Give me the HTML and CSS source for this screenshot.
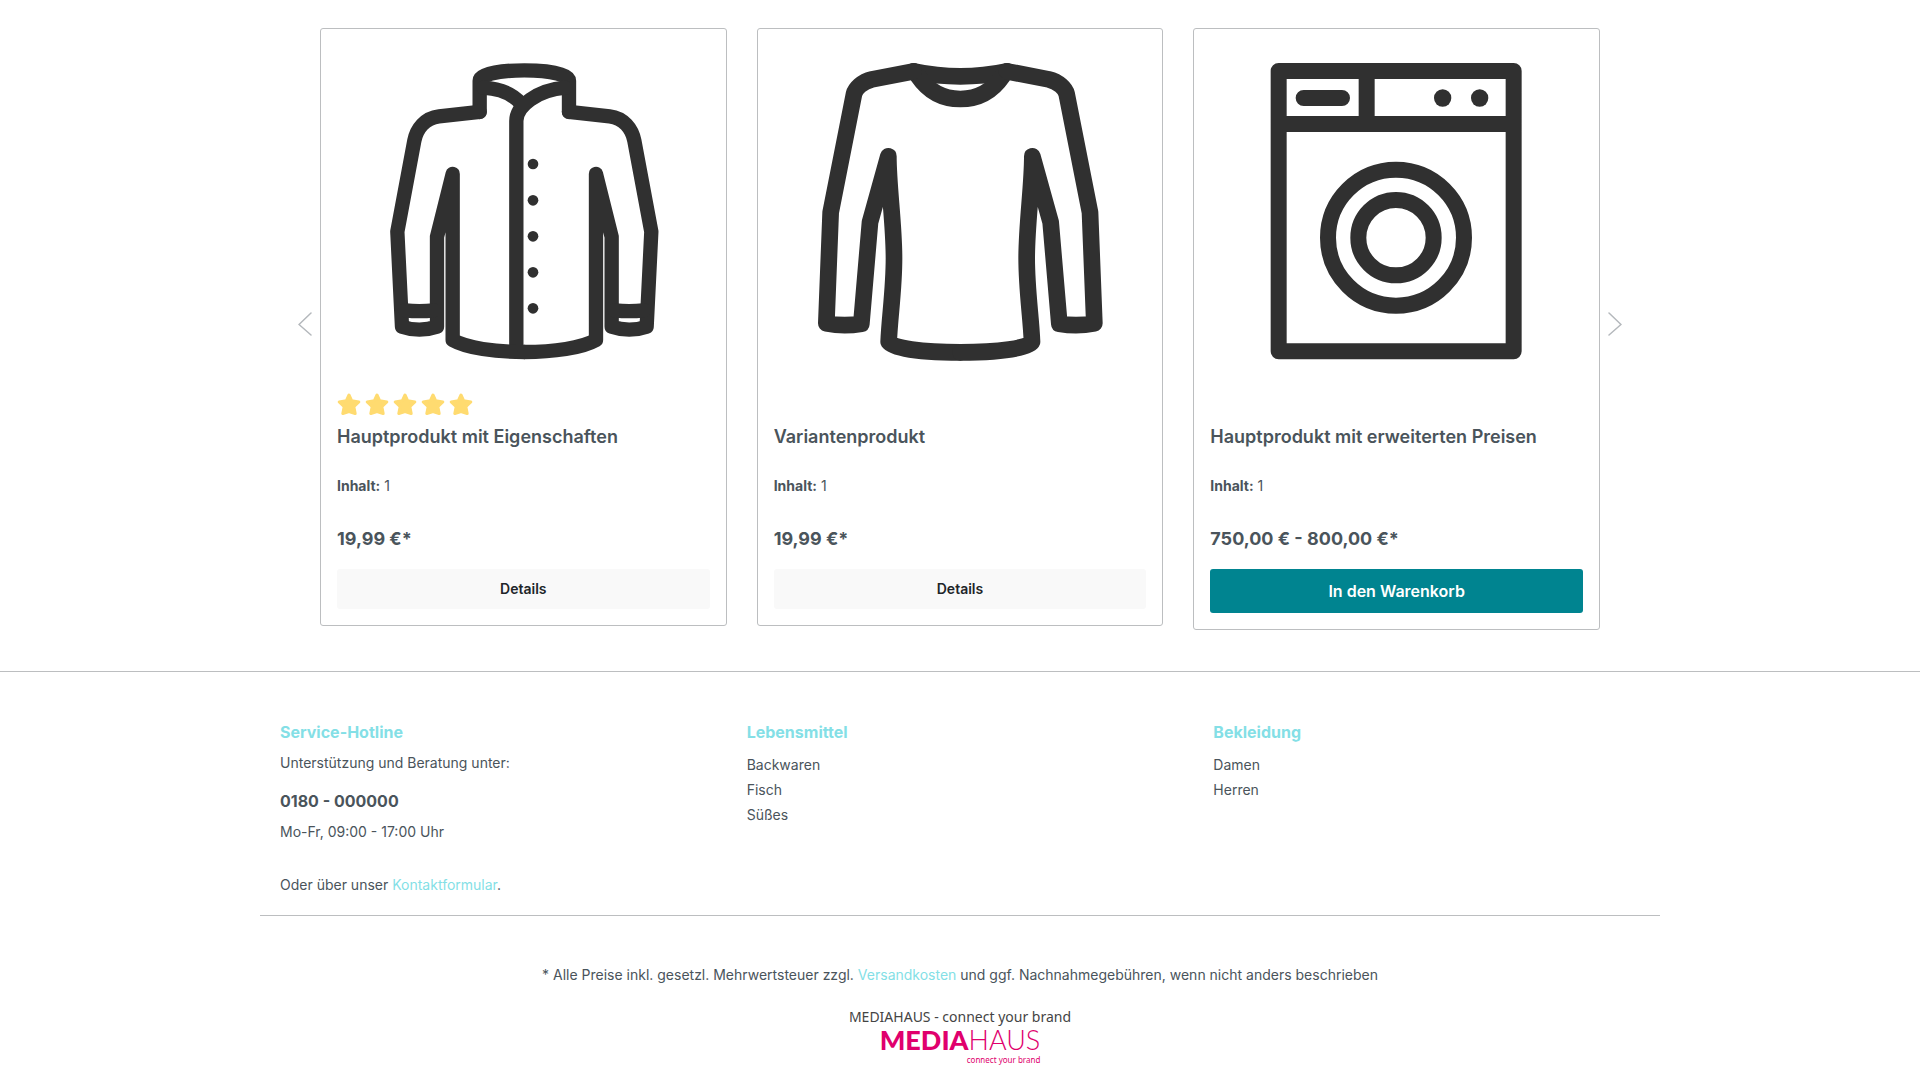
FILE: index.html
```html
<!DOCTYPE html>
<html lang="de">
<head>
<meta charset="utf-8">
<meta name="viewport" content="width=device-width, initial-scale=1">
<title>Shop</title>
<link rel="stylesheet" href="styles.css">
</head>
<body>
<svg class="defs" aria-hidden="true">
  <symbol id="star" viewBox="0 0 24 24"><path d="M12 3 L14.600 8.600 L21.800 10 L16.800 14.600 L18.200 21.500 L12 19.500 L5.800 21.500 L7.200 14.600 L2.200 10 L9.400 8.600 Z"/></symbol>
</svg>
<main class="slider">
  <button class="arrow" type="button" aria-label="Zurück"><svg viewBox="0 0 14 24"><path d="M13 1 L1 12.500 L13 23"/></svg></button>
  <div class="products">
    <article class="card">
      <svg class="picture" viewBox="141 105 1118 996" stroke-width="43" role="img" aria-label="Jacke">
        <path d="M569 306 V212 C569 196 618 181 703 181 S837 196 837 212 V306"/>
        <path d="M580 233 C632 236 668 252 692 280"/>
        <path d="M826 233 C742 240 679 288 679 333 V1025"/>
        <g id="jacket-side">
          <path d="M569 306 L447 319 C405 324 380 356 373 392 L322 665 L336 950 Q388 968 441 950 V680 L488 492 V990 C530 1014 615 1026 703 1026"/>
          <path d="M345 901 Q388 906 432 901"/>
        </g>
        <use href="#jacket-side" transform="translate(1406 0) scale(-1 1)"/>
        <g class="solid"><circle cx="729" cy="462" r="16"/><circle cx="729" cy="571" r="16"/><circle cx="729" cy="679" r="16"/><circle cx="729" cy="787" r="16"/><circle cx="729" cy="895" r="16"/></g>
      </svg>
      <div class="rating" role="img" aria-label="5 von 5 Sternen">
        <svg><use href="#star"/></svg><svg><use href="#star"/></svg><svg><use href="#star"/></svg><svg><use href="#star"/></svg><svg><use href="#star"/></svg>
      </div>
      <h2>Hauptprodukt mit Eigenschaften</h2>
      <p class="unit"><strong>Inhalt:</strong> 1</p>
      <p class="price">19,99 €*</p>
      <button class="btn" type="button">Details</button>
    </article>
    <article class="card">
      <svg class="picture" viewBox="101 105 1118 996" stroke-width="50" role="img" aria-label="Pullover">
        <path d="M520 184 Q660 214 800 184"/>
        <path d="M533 198 C565 245 610 267 660 267 S755 245 787 198"/>
        <g id="sweater-side">
          <path d="M520 184 L395 208 C365 215 345 236 341 252 L271 607 L258 940 Q310 950 363 941 L389 637 L444 439 C444 530 461 640 461 745 C461 840 448 920 445 995 C452 1015 550 1027 660 1027"/>
        </g>
        <use href="#sweater-side" transform="translate(1320 0) scale(-1 1)"/>
      </svg>
      <div class="rating"></div>
      <h2>Variantenprodukt</h2>
      <p class="unit"><strong>Inhalt:</strong> 1</p>
      <p class="price">19,99 €*</p>
      <button class="btn" type="button">Details</button>
    </article>
    <article class="card">
      <svg class="picture" viewBox="91 105 1118 996" stroke-width="48" role="img" aria-label="Waschmaschine">
        <path d="M297 183 H1002 V1024 H297 Z M297 342 H1002 M561 183 V342 M372 264 H487"/>
        <circle cx="649" cy="683" r="204"/><circle cx="649" cy="683" r="113"/>
        <g class="solid"><circle cx="789" cy="264" r="26"/><circle cx="900" cy="264" r="26"/></g>
      </svg>
      <div class="rating"></div>
      <h2>Hauptprodukt mit erweiterten Preisen</h2>
      <p class="unit"><strong>Inhalt:</strong> 1</p>
      <p class="price">750,00 € - 800,00 €*</p>
      <button class="btn btn-buy" type="button">In den Warenkorb</button>
    </article>
  </div>
  <button class="arrow" type="button" aria-label="Weiter"><svg viewBox="0 0 14 24"><path d="M1 1 L13 12.500 L1 23"/></svg></button>
</main>
<footer class="footer">
  <div class="columns">
    <section>
      <h3>Service-Hotline</h3>
      <p>Unterstützung und Beratung unter:</p>
      <p class="phone">0180 - 000000</p>
      <p>Mo-Fr, 09:00 - 17:00 Uhr</p>
      <p class="contact">Oder über unser <a href="#kontakt">Kontaktformular</a>.</p>
    </section>
    <section>
      <h3>Lebensmittel</h3>
      <ul>
        <li><a href="#backwaren">Backwaren</a></li>
        <li><a href="#fisch">Fisch</a></li>
        <li><a href="#suesses">Süßes</a></li>
      </ul>
    </section>
    <section>
      <h3>Bekleidung</h3>
      <ul>
        <li><a href="#damen">Damen</a></li>
        <li><a href="#herren">Herren</a></li>
      </ul>
    </section>
  </div>
  <p class="vat">* Alle Preise inkl. gesetzl. Mehrwertsteuer zzgl. <a href="#versand">Versandkosten</a> und ggf. Nachnahmegebühren, wenn nicht anders beschrieben</p>
  <div class="agency">
    <p>MEDIAHAUS - connect your brand</p>
    <a class="logo" href="#mediahaus"><span class="wordmark"><b>MEDIA</b>HAUS</span><small>connect your brand</small></a>
  </div>
</footer>
</body>
</html>
```
FILE: styles.css
```css
* { box-sizing: border-box; }
body { margin: 0; background: #fff; color: #4a545b; font: 14px/20px Inter, "Liberation Sans", sans-serif; }
h2, h3, p, ul { margin: 0; padding: 0; }
ul { list-style: none; }
a { color: #84dfe6; text-decoration: none; }
button { font: inherit; border: 0; cursor: pointer; }
.defs { position: absolute; width: 0; height: 0; }

.slider { display: flex; justify-content: center; align-items: center; gap: 8px; padding: 28px 20px 41px; }
.arrow { display: flex; padding: 0; margin-bottom: 10px; background: none; }
.arrow svg { width: 14px; height: 24px; fill: none; stroke: #b4b8bc; stroke-width: 1.5; stroke-linecap: round; }
.products { flex: 0 1 1280px; display: grid; grid-template-columns: repeat(3, minmax(0, 1fr)); gap: 30px; align-items: start; }
.card { display: flex; flex-direction: column; padding: 16px; border: 1px solid #bcbec0; border-radius: 3px; }
.picture { display: block; width: 100%; fill: none; stroke: #303030; stroke-linecap: round; stroke-linejoin: round; }
.solid { fill: #303030; stroke: none; }
.rating { display: flex; gap: 4px; height: 24px; margin-top: 15px; }
.rating svg { width: 24px; height: 24px; fill: #ffdb70; stroke: #ffdb70; stroke-width: 3; stroke-linejoin: round; }
.card h2 { margin-top: 8px; font-size: 18px; line-height: 26px; font-weight: 600; }
.unit { margin-top: 26px; }
.price { margin-top: 31px; font-size: 18px; line-height: 24px; font-weight: 700; }
.btn { height: 40px; margin-top: 18px; border-radius: 3px; background: #f9f9f9; color: #212529; font-weight: 600; }
.btn-buy { height: 44px; background: #008490; color: #fff; font-size: 16px; }

.footer { border-top: 1px solid #bcbec0; }
.columns { display: grid; grid-template-columns: repeat(3, 1fr); max-width: 1400px; margin: 0 auto; padding: 48px 0 20px; border-bottom: 1px solid #bcbec0; }
.columns section { padding: 0 20px; }
.columns h3 { color: #84dfe6; font-size: 16px; line-height: 24px; font-weight: 700; }
.columns p { margin-top: 9px; }
.columns .phone { margin-top: 16px; font-size: 16px; line-height: 24px; font-weight: 700; }
.columns .contact { margin-top: 33px; }
.columns ul { margin-top: 8px; }
.columns li { line-height: 25px; }
.columns li a { color: inherit; }
.vat { margin-top: 49px; text-align: center; }
.agency { display: flex; flex-direction: column; align-items: center; margin-top: 22px; color: #444; font-family: "Noto Sans", sans-serif; }
.logo { display: flex; flex-direction: column; align-items: flex-end; color: #e0006d; font-family: Lato, sans-serif; }
.wordmark { font-size: 27px; line-height: 26px; font-weight: 300; }
.wordmark b { font-weight: 900; }
.logo small { padding-top: 2px; font: 8px/10px "Noto Sans", sans-serif; }
```
